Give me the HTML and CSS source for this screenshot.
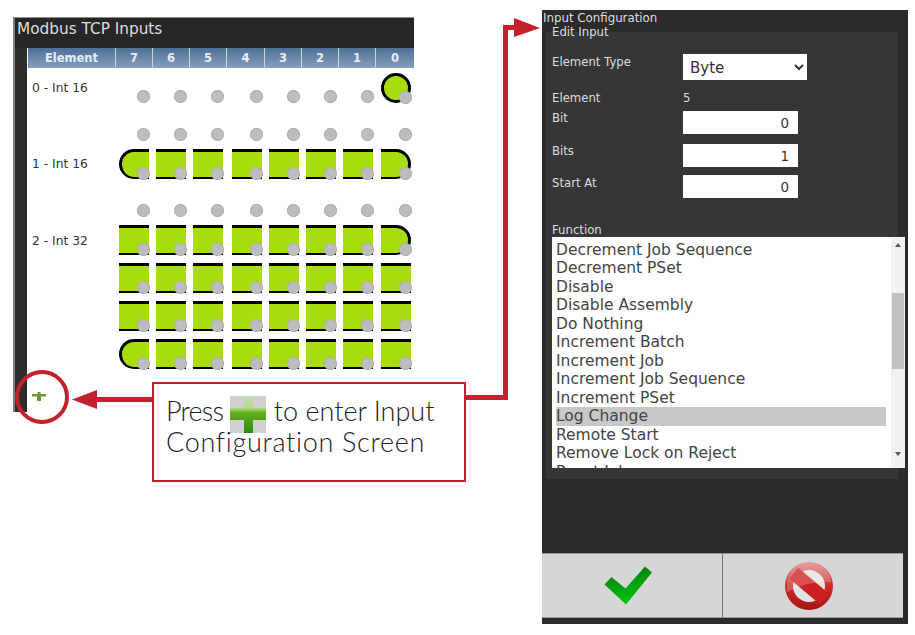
FILE: index.html
```html
<!DOCTYPE html>
<html lang="en">
<head>
  <meta charset="UTF-8" />
  <meta name="viewport" content="width=device-width, initial-scale=1" />
  <title>Modbus TCP Inputs</title>
  <link rel="stylesheet" href="styles.css">
</head>
<body>
  <div class="figure">
    <div class="inputs-panel">
      <div class="inputs-title">Modbus TCP Inputs</div>
      <div class="inputs-head">
        <span>Element</span><span>7</span><span>6</span><span>5</span><span>4</span><span>3</span><span>2</span><span>1</span><span>0</span>
      </div>
      <div class="inputs-grid">
        <div class="row-label">0 - Int 16</div>
        <i class="bit"></i><i class="bit"></i><i class="bit"></i><i class="bit"></i><i class="bit"></i><i class="bit"></i><i class="bit"></i><i class="bit on round-both"></i>

        <div class="row-label"></div>
        <i class="bit"></i><i class="bit"></i><i class="bit"></i><i class="bit"></i><i class="bit"></i><i class="bit"></i><i class="bit"></i><i class="bit"></i>

        <div class="row-label">1 - Int 16</div>
        <i class="bit on round-left"></i><i class="bit on"></i><i class="bit on"></i><i class="bit on"></i><i class="bit on"></i><i class="bit on"></i><i class="bit on"></i><i class="bit on round-right"></i>

        <div class="row-label"></div>
        <i class="bit"></i><i class="bit"></i><i class="bit"></i><i class="bit"></i><i class="bit"></i><i class="bit"></i><i class="bit"></i><i class="bit"></i>

        <div class="row-label label-low">2 - Int 32</div>
        <i class="bit on"></i><i class="bit on"></i><i class="bit on"></i><i class="bit on"></i><i class="bit on"></i><i class="bit on"></i><i class="bit on"></i><i class="bit on round-right"></i>

        <div class="row-label"></div>
        <i class="bit on"></i><i class="bit on"></i><i class="bit on"></i><i class="bit on"></i><i class="bit on"></i><i class="bit on"></i><i class="bit on"></i><i class="bit on"></i>

        <div class="row-label"></div>
        <i class="bit on"></i><i class="bit on"></i><i class="bit on"></i><i class="bit on"></i><i class="bit on"></i><i class="bit on"></i><i class="bit on"></i><i class="bit on"></i>

        <div class="row-label"></div>
        <i class="bit on round-left"></i><i class="bit on"></i><i class="bit on"></i><i class="bit on"></i><i class="bit on"></i><i class="bit on"></i><i class="bit on"></i><i class="bit on"></i>
      </div>
      <svg class="add-icon" viewBox="0 0 14 10" width="14" height="10">
        <path d="M5.500 1h3v2h5.500v2.500h-5v4.500h-4v-4.500h-5v-2.500h5.500z" fill="#6c9c2a"/>
      </svg>
    </div>

    <div class="config-panel">
      <div class="config-title">Input Configuration</div>
      <div class="config-body">
        <div class="edit-title">Edit Input</div>
        <div class="field field-type">
          <label>Element Type</label>
          <select class="type-select"><option>Byte</option></select>
        </div>
        <div class="field field-element">
          <label>Element</label>
          <span>5</span>
        </div>
        <div class="field field-bit">
          <label>Bit</label>
          <input class="num" type="text" value="0">
        </div>
        <div class="field field-bits">
          <label>Bits</label>
          <input class="num" type="text" value="1">
        </div>
        <div class="field field-start">
          <label>Start At</label>
          <input class="num" type="text" value="0">
        </div>
        <div class="function-label">Function</div>
        <div class="function-list">
          <div class="options">
            <div>Decrement Job Sequence</div>
            <div>Decrement PSet</div>
            <div>Disable</div>
            <div>Disable Assembly</div>
            <div>Do Nothing</div>
            <div>Increment Batch</div>
            <div>Increment Job</div>
            <div>Increment Job Sequence</div>
            <div>Increment PSet</div>
            <div class="selected">Log Change</div>
            <div>Remote Start</div>
            <div>Remove Lock on Reject</div>
            <div>Reset Job</div>
          </div>
          <div class="scrollbar">
            <span class="arrow-up"></span>
            <span class="thumb"></span>
            <span class="arrow-down"></span>
          </div>
        </div>
      </div>
      <div class="config-buttons">
        <div class="config-btn">
          <svg viewBox="0 0 48 40" width="48" height="40">
            <defs>
              <linearGradient id="checkFill" x1="0" y1="0" x2="0.3" y2="1">
                <stop offset="0" stop-color="#0b6f14"/>
                <stop offset="1" stop-color="#00c40a"/>
              </linearGradient>
            </defs>
            <path d="M0.500 18.500L7.500 11L21.500 22.500L41 0.500L48 6.500L22 38.500z" fill="url(#checkFill)"/>
          </svg>
        </div>
        <div class="config-btn">
          <svg viewBox="0 0 48 48" width="48" height="48">
            <defs>
              <linearGradient id="ringFill" x1="0" y1="0" x2="0" y2="1">
                <stop offset="0" stop-color="#d98482"/>
                <stop offset="0.5" stop-color="#d02a2a"/>
                <stop offset="1" stop-color="#a81414"/>
              </linearGradient>
            </defs>
            <circle cx="24" cy="24" r="24" fill="url(#ringFill)"/>
            <circle cx="24" cy="24" r="16" fill="#e2e2e2"/>
            <rect x="4" y="17" width="40" height="14" fill="#cc2022" transform="rotate(40 24 24)"/>
            <path d="M2 22a22 21 0 0 1 44 -2q-20 -2 -44 10z" fill="#fff" opacity="0.22"/>
          </svg>
        </div>
      </div>
    </div>
  </div>

  <svg class="arrows" viewBox="0 0 915 635" width="915" height="635">
    <circle cx="42" cy="397" r="25" fill="none" stroke="#c5202e" stroke-width="4"/>
    <path d="M72 399.500L97 390V397H152V402H97V409z" fill="#c5202e"/>
    <path d="M465 395H503V25H514V18L540 28L514 37V30H508V400H465z" fill="#c5202e"/>
  </svg>

  <div class="callout">
    <div class="callout-line">
      <span class="callout-press">Press</span>
      <svg class="callout-plus" viewBox="0 0 36 37" width="36" height="37">
        <defs>
          <linearGradient id="plusFill" x1="0" y1="0" x2="0" y2="1">
            <stop offset="0" stop-color="#cbd6c0"/>
            <stop offset="0.32" stop-color="#b4de84"/>
            <stop offset="0.45" stop-color="#62ae20"/>
            <stop offset="1" stop-color="#2f8a10"/>
          </linearGradient>
        </defs>
        <rect width="36" height="37" fill="#cfd0d0"/>
        <path d="M14 0h9v12h13v12h-13v13h-9v-13h-14v-12h14z" fill="url(#plusFill)"/>
      </svg>
      to enter Input
    </div>
    <div class="callout-line callout-wide">Configuration Screen</div>
  </div>
</body>
</html>
```

FILE: styles.css
```css
html, body {
  margin: 0;
  padding: 0;
  background: #fff;
}
body {
  position: relative;
  width: 915px;
  height: 635px;
  overflow: hidden;
  font-family: "DejaVu Sans", sans-serif;
}
.figure {
  display: flex;
  align-items: flex-start;
}

/* left screen */
.inputs-panel {
  position: relative;
  box-sizing: border-box;
  width: 401px;
  height: 395px;
  margin: 17px 0 0 13px;
  border-left: 2px solid #7c8088;
  border-top: 1px solid #8a8a8a;
  background: linear-gradient(90deg, #2d2d2d 12px, #fff 12px);
}
.inputs-title {
  height: 30px;
  padding-left: 2px;
  background: #262626;
  color: #ddd;
  font-size: 15.300px;
  line-height: 22px;
}
.inputs-head {
  display: grid;
  grid-template-columns: 88px 37px 37px 37px 38px 37px 37px 37px 38px;
  height: 20px;
  margin-left: 13px;
  background: linear-gradient(#4d6f97, #86a0bd);
  color: #e8eef4;
  font-size: 11.500px;
  font-weight: bold;
  line-height: 20px;
  text-align: center;
}
.inputs-head span {
  border-right: 1px solid #c5d2df;
}
.inputs-head span:last-child {
  border-right: none;
}
.inputs-grid {
  display: grid;
  grid-template-columns: 88px 37px 37px 39px 37px 37px 37px 38px 36px;
  grid-auto-rows: 38px;
  margin-left: 13px;
  padding-top: 5px;
}
.row-label {
  padding: 7px 0 0 4px;
  color: #333;
  font-size: 12.300px;
  line-height: 16px;
}
.label-low {
  padding-top: 8px;
}
.bit {
  position: relative;
  box-sizing: border-box;
  display: block;
  width: 30px;
  height: 30px;
  margin-left: 3px;
}
.bit::after {
  content: "";
  position: absolute;
  left: 18px;
  top: 17px;
  width: 13px;
  height: 13px;
  border-radius: 50%;
  background: #bdbdbd;
  box-shadow: 0 0 0 1px #aeaeae inset;
}
.bit.on {
  border-top: 3px solid #000;
  border-bottom: 2px solid #000;
  background: #a9dc0c;
}
.bit.on::after {
  top: 14.500px;
}
.round-left {
  border-left: 3px solid #000;
  border-radius: 15px 0 0 15px;
}
.round-left::after {
  left: 15px;
}
.round-right {
  border-right: 3px solid #000;
  border-radius: 0 15px 15px 0;
}
.round-both {
  border: 3px solid #000 !important;
  border-radius: 50%;
}
.round-both::after {
  left: 15px;
  top: 14.500px;
}
.add-icon {
  position: absolute;
  left: 17px;
  top: 373px;
}

/* right screen */
.config-panel {
  display: flex;
  flex-direction: column;
  box-sizing: border-box;
  width: 366px;
  height: 614px;
  margin: 10px 0 0 128px;
  background: #2b2b2b;
}
.config-title {
  height: 22px;
  padding: 1px 0 0 1px;
  box-sizing: border-box;
  color: #ddd;
  font-size: 11.800px;
  line-height: 14px;
}
.config-body {
  position: relative;
  box-sizing: border-box;
  width: 352px;
  height: 447px;
  margin-left: 4px;
  background: #363636;
  color: #ddd;
  font-size: 11.700px;
}
.edit-title {
  position: absolute;
  left: 6px;
  top: -7px;
  line-height: 14px;
}
.field {
  display: flex;
  align-items: flex-start;
  padding-left: 6px;
}
.field label {
  width: 131px;
  line-height: 14px;
}
.field-type {
  padding-top: 22px;
}
.field-type label {
  padding-top: 1px;
}
.field-element {
  padding-top: 11px;
}
.field-bit {
  padding-top: 6px;
}
.field-bits {
  padding-top: 10px;
}
.field-start {
  padding-top: 8px;
}
.field-start label {
  padding-top: 1px;
}
.type-select {
  box-sizing: border-box;
  width: 124px;
  height: 26px;
  padding: 2px 0 0 3px;
  border: none;
  border-radius: 0;
  background-color: #fff;
  color: #333;
  font-family: "DejaVu Sans", sans-serif;
  font-size: 15px;
}
.num {
  box-sizing: border-box;
  width: 115px;
  height: 23px;
  padding: 0 9px 0 0;
  border: none;
  background: #fff;
  color: #333;
  font-family: "DejaVu Sans", sans-serif;
  font-size: 13.500px;
  text-align: right;
}
.function-label {
  position: absolute;
  left: 6px;
  top: 191px;
  line-height: 14px;
}
.function-list {
  position: absolute;
  left: 6px;
  top: 205px;
  display: flex;
  justify-content: space-between;
  width: 353px;
  height: 231px;
  overflow: hidden;
  background: #fff;
}
.options {
  width: 330px;
  margin-left: 4px;
  padding-top: 3.500px;
  color: #444;
  font-size: 15.500px;
  line-height: 18.500px;
}
.selected {
  background: #c8c8c8;
}
.scrollbar {
  display: flex;
  flex-direction: column;
  align-items: center;
  width: 14px;
  background: #f1f1f1;
}
.thumb {
  width: 12px;
  height: 76px;
  margin-top: 46px;
  background: #c0c0c0;
}
.arrow-up,
.arrow-down {
  width: 0;
  height: 0;
  border-left: 3px solid transparent;
  border-right: 3px solid transparent;
}
.arrow-up {
  margin-top: 6px;
  border-bottom: 4px solid #555;
}
.arrow-down {
  margin-top: 83px;
  border-top: 4px solid #555;
}
.config-buttons {
  display: flex;
  height: 65px;
  margin-top: 74px;
  width: 361px;
}
.config-btn {
  display: flex;
  align-items: center;
  justify-content: center;
  flex: 1;
  box-sizing: border-box;
  padding-right: 8px;
  border-top: 1px solid #9a9a9a;
  border-bottom: 1px solid #9a9a9a;
  background: #d6d6d6;
}
.config-btn + .config-btn {
  border-left: 1px solid #777;
}

/* annotations */
.arrows {
  position: absolute;
  left: 0;
  top: 0;
  pointer-events: none;
}
.callout {
  position: absolute;
  left: 152px;
  top: 382px;
  box-sizing: border-box;
  width: 314px;
  height: 100px;
  padding: 11px 0 0 12px;
  border: 2px solid #c5202e;
  background: #fff;
  color: #22222f;
  font-family: "Lato", sans-serif;
  font-size: 27px;
  font-weight: 300;
  font-variant-ligatures: none;
}
.callout-line {
  height: 31px;
  line-height: 31px;
  white-space: nowrap;
}
.callout-press {
  letter-spacing: -0.800px;
}
.callout-wide {
  letter-spacing: 0.700px;
}
.callout-plus {
  vertical-align: middle;
}
```
